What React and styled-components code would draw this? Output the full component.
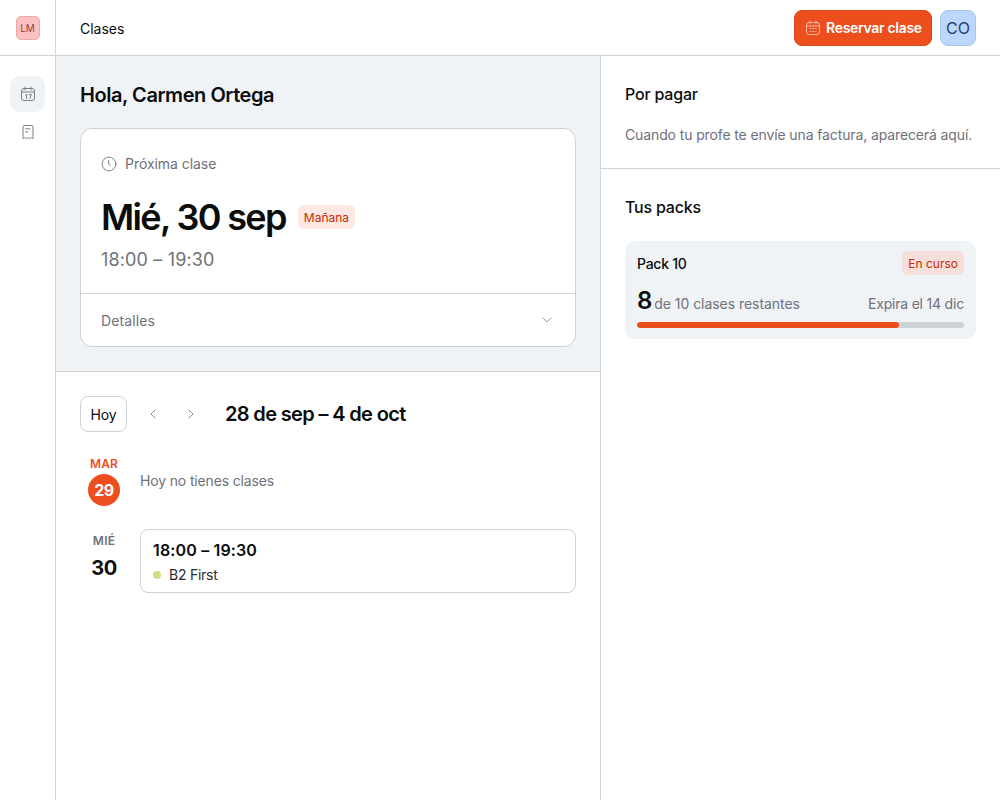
import React from "react";
import styled, { createGlobalStyle } from "styled-components";
import { ChevronDown, ChevronLeft, ChevronRight } from "lucide-react";

const Global = createGlobalStyle`
  html, body { margin: 0; padding: 0; background: #fff; }
  * { box-sizing: border-box; }
  body { font-family: Inter, "Liberation Sans", sans-serif; color: #0a0c0d; }
`;
const Glyph = styled.svg`flex: none; fill: none; stroke: currentColor; stroke-width: 1; stroke-linecap: round; stroke-linejoin: round;`;
const CalendarToday = () => (
  <Glyph width="16" height="16" viewBox="0 0 16 16">
    <rect x="1.5" y="2.5" width="13" height="12" rx="2.5" />
    <path d="M1.5 6h13M5 1v3M11 1v3" />
    <path d="M5.6 9.2l1-.7v4M9 8.6h2.4L9.8 12.5" />
  </Glyph>
);
const CalendarGrid = () => (
  <Glyph width="16" height="16" viewBox="0 0 16 16">
    <rect x="1.5" y="2.5" width="13" height="12" rx="2.5" />
    <path d="M1.5 6h13M5 1v3M11 1v3" />
    <path d="M4.8 8.5h1M7.5 8.5h1M10.2 8.5h1M4.8 11.5h1M7.5 11.5h1M10.2 11.5h1" />
  </Glyph>
);
const Receipt = () => (
  <Glyph width="16" height="16" viewBox="0 0 16 16">
    <path d="M4.5 1.5h7a1.5 1.5 0 0 1 1.5 1.5v11.5c-.8 0-1 -.8-1.7-.8s-1 .8-1.6.8-1-.8-1.7-.8-1 .8-1.6.8-1-.8-1.7-.8S3.8 14.5 3 14.5V3a1.5 1.5 0 0 1 1.5-1.5z" />
    <path d="M5.5 4.8h4.5M5.5 7.8h2.5" />
  </Glyph>
);
const ClockIcon = () => (
  <Glyph width="16" height="16" viewBox="0 0 16 16">
    <circle cx="8" cy="8" r="6.9" />
    <path d="M7.7 4.5v3.6l1.6 1.2" />
  </Glyph>
);

const Shell = styled.div`display: grid; grid-template-columns: 56px 1fr; grid-template-rows: 56px 1fr; width: 1000px; height: 800px; overflow: hidden;`;
const Brand = styled.div`display: flex; align-items: center; justify-content: center; border-right: 1px solid #d0d5d8; border-bottom: 1px solid #d0d5d8;`;
const Logo = styled.div`width: 24px; height: 24px; border-radius: 5px; background: #fdc0c0; border: 1px solid #e8a9a9; color: #8f4040; font-size: 10px; display: flex; align-items: center; justify-content: center;`;
const TopBar = styled.header`display: flex; align-items: center; justify-content: space-between; padding: 0 24px; border-bottom: 1px solid #d0d5d8;`;
const PageName = styled.div`font-size: 14px; font-weight: 400; letter-spacing: 0; padding-top: 2px;`;
const TopActions = styled.div`display: flex; align-items: center; gap: 8px;`;
const BookButton = styled.button`height: 36px; width: 138px; padding: 0 10px; display: flex; align-items: center; gap: 5px; background: #ec4e1e; color: #fff; border: 1px solid #d9481b; border-radius: 8px; font: 600 14px Inter, sans-serif; letter-spacing: -0.3px; white-space: nowrap; svg { color: #fbb9a2; }`;
const Avatar = styled.div`width: 36px; height: 36px; border-radius: 8px; background: #bcd7fb; border: 1px solid #a6c3ea; color: #24407a; font-size: 16px; display: flex; align-items: center; justify-content: center;`;
const Side = styled.nav`border-right: 1px solid #d0d5d8; padding: 20px 10px; display: flex; flex-direction: column; gap: 2px;`;
const SideItem = styled.div`width: 35px; height: 36px; border-radius: 10px; background: ${p => (p.$active ? "#f0f3f6" : "transparent")}; color: #7d8086; display: flex; align-items: center; justify-content: center;`;
const Content = styled.div`display: grid; grid-template-columns: 545px 1fr; min-height: 0;`;
const Left = styled.main`border-right: 1px solid #d0d5d8;`;
const Hero = styled.section`height: 316px; background: #f0f3f6; border-bottom: 1px solid #d0d5d8; padding: 24px;`;
const Greeting = styled.h1`margin: 0 0 18px; font-size: 20px; line-height: 30px; font-weight: 600; letter-spacing: -0.45px;`;
const Card = styled.div`background: #fff; border: 1px solid #ccd3d6; border-radius: 12px; height: 219px; display: flex; flex-direction: column;`;
const CardBody = styled.div`flex: 1; padding: 24px 20px 0; border-bottom: 1px solid #d0d5d8;`;
const NextLabel = styled.div`display: flex; align-items: center; gap: 8px; color: #6f7178; font-size: 14px; line-height: 22px; letter-spacing: -0.05px; svg { color: #7d8086; }`;
const DateRow = styled.div`display: flex; align-items: center; gap: 12px; margin-top: 20px;`;
const BigDate = styled.div`font-size: 36px; line-height: 44px; font-weight: 600; letter-spacing: -1.65px;`;
const Pill = styled.span`display: inline-flex; align-items: center; justify-content: center; height: 24px; padding: 0 6px; border-radius: 6px; font-size: 12px; font-weight: 400; letter-spacing: 0; color: #cb2a05; background: ${p => p.$bg};`;
const TimeText = styled.div`margin-top: 9px; font-size: 18px; line-height: 24px; color: #6f7178; letter-spacing: 0.15px;`;
const Details = styled.div`height: 52px; padding: 0 20px; display: flex; align-items: center; justify-content: space-between; color: #6f7178; font-size: 14px; font-weight: 400; letter-spacing: 0.1px; svg { color: #7d8086; }`;
const Week = styled.section`padding: 24px;`;
const WeekBar = styled.div`display: flex; align-items: center; height: 36px;`;
const TodayBtn = styled.button`width: 47px; height: 36px; border: 1px solid #ccd3d6; border-radius: 8px; background: #fff; color: #0a0c0d; font: 400 14px Inter, sans-serif; letter-spacing: -0.1px;`;
const Arrow = styled.div`width: 38px; display: flex; justify-content: center; color: #6f7178;`;
const Arrows = styled.div`display: flex; margin: 0 15px 0 7px;`;
const Range = styled.div`font-size: 20px; font-weight: 600; letter-spacing: -0.65px;`;
const DayRow = styled.div`display: grid; grid-template-columns: 48px 1fr; gap: 12px; margin-top: ${p => p.$mt}px;`;
const DayCol = styled.div`display: flex; flex-direction: column; align-items: center; padding-top: ${p => p.$pt}px;`;
const DayName = styled.div`font-size: 12px; line-height: 16px; font-weight: 600; letter-spacing: 0.2px; color: ${p => (p.$today ? "#ec4e1e" : "#6f7178")};`;
const DayNum = styled.div`width: 32px; height: 32px; border-radius: 50%; display: flex; align-items: center; justify-content: center; font-weight: 700; margin-top: ${p => p.$mt}px; font-size: ${p => (p.$today ? 16 : 20)}px; letter-spacing: -0.4px; color: ${p => (p.$today ? "#fff" : "#0a0c0d")}; background: ${p => (p.$today ? "#ec4e1e" : "transparent")};`;
const Empty = styled.div`padding-top: 15px; font-size: 14px; line-height: 20px; color: #6f7178; letter-spacing: -0.15px;`;
const ClassCard = styled.div`height: 64px; border: 1px solid #ccd3d6; border-radius: 8px; padding: 9px 12px;`;
const ClassTime = styled.div`font-size: 16px; line-height: 22px; font-weight: 600; letter-spacing: 0.15px;`;
const ClassName = styled.div`display: flex; align-items: center; gap: 8px; margin-top: 4px; font-size: 14px; line-height: 20px; letter-spacing: -0.25px; color: #2a2d30;`;
const Dot = styled.span`width: 8px; height: 8px; border-radius: 50%; background: #c9df86;`;
const Right = styled.aside``;
const Block = styled.section`padding: 24px; border-bottom: ${p => (p.$line ? "1px solid #d0d5d8" : "none")}; height: ${p => p.$h};`;
const BlockTitle = styled.h2`margin: 0; font-size: 16px; line-height: 28px; font-weight: 500; letter-spacing: -0.2px;`;
const Muted = styled.p`margin: 17px 0 0; font-size: 14px; line-height: 20px; color: #6f7178; letter-spacing: -0.12px; white-space: nowrap;`;
const Pack = styled.div`margin-top: 20px; height: 98px; background: #f0f3f6; border-radius: 10px; padding: 10px 12px;`;
const PackTop = styled.div`display: flex; align-items: center; justify-content: space-between; height: 24px; font-size: 14px; font-weight: 500; letter-spacing: -0.25px;`;
const PackMid = styled.div`display: flex; align-items: baseline; justify-content: space-between; margin-top: 11px; height: 28px; font-size: 14px; color: #6f7178; letter-spacing: -0.2px;`;
const MidLeft = styled.span`letter-spacing: -0.05px;`;
const Count = styled.strong`font-size: 24px; font-weight: 600; color: #0a0c0d; margin-right: 2px;`;
const Track = styled.div`height: 6px; margin-top: 8px; border-radius: 3px; background: #ccd3d6; overflow: hidden;`;
const Fill = styled.div`height: 100%; border-radius: 3px; background: #ec4e1e;`;

export default function App() {
  return (
    <Shell>
      <Global />
      <Brand><Logo>LM</Logo></Brand>
      <TopBar>
        <PageName>Clases</PageName>
        <TopActions>
          <BookButton><CalendarGrid />Reservar clase</BookButton>
          <Avatar>CO</Avatar>
        </TopActions>
      </TopBar>
      <Side>
        <SideItem $active><CalendarToday /></SideItem>
        <SideItem><Receipt /></SideItem>
      </Side>
      <Content>
        <Left>
          <Hero>
            <Greeting>Hola, Carmen Ortega</Greeting>
            <Card>
              <CardBody>
                <NextLabel><ClockIcon />Próxima clase</NextLabel>
                <DateRow><BigDate>Mié, 30 sep</BigDate><Pill $bg="#fde8e3">Mañana</Pill></DateRow>
                <TimeText>18:00 – 19:30</TimeText>
              </CardBody>
              <Details>Detalles<ChevronDown size={16} strokeWidth={1.25} /></Details>
            </Card>
          </Hero>
          <Week>
            <WeekBar>
              <TodayBtn>Hoy</TodayBtn>
              <Arrows>
                <Arrow><ChevronLeft size={16} strokeWidth={1.25} /></Arrow>
                <Arrow><ChevronRight size={16} strokeWidth={1.25} /></Arrow>
              </Arrows>
              <Range>28 de sep – 4 de oct</Range>
            </WeekBar>
            <DayRow $mt={24}>
              <DayCol $pt={0}><DayName $today>MAR</DayName><DayNum $today $mt={2}>29</DayNum></DayCol>
              <Empty>Hoy no tienes clases</Empty>
            </DayRow>
            <DayRow $mt={23}>
              <DayCol $pt={4}><DayName>MIÉ</DayName><DayNum $mt={3}>30</DayNum></DayCol>
              <ClassCard>
                <ClassTime>18:00 – 19:30</ClassTime>
                <ClassName><Dot />B2 First</ClassName>
              </ClassCard>
            </DayRow>
          </Week>
        </Left>
        <Right>
          <Block $line $h="113px">
            <BlockTitle>Por pagar</BlockTitle>
            <Muted>Cuando tu profe te envíe una factura, aparecerá aquí.</Muted>
          </Block>
          <Block>
            <BlockTitle>Tus packs</BlockTitle>
            <Pack>
              <PackTop>Pack 10<Pill $bg="#f4dfdb">En curso</Pill></PackTop>
              <PackMid>
                <MidLeft><Count>8</Count>de 10 clases restantes</MidLeft>
                <span>Expira el 14 dic</span>
              </PackMid>
              <Track><Fill style={{ width: `${(8 / 10) * 100}%` }} /></Track>
            </Pack>
          </Block>
        </Right>
      </Content>
    </Shell>
  );
}
